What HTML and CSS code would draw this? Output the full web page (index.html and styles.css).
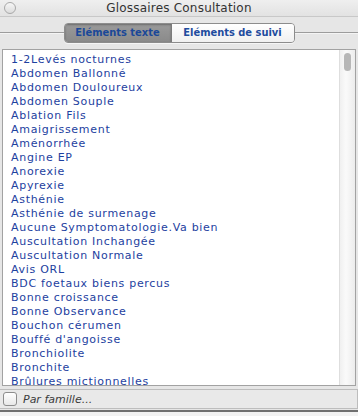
FILE: index.html
```html
<!DOCTYPE html>
<html lang="fr">
<head>
    <meta charset="UTF-8">
    <title>Glossaires Consultation</title>
    <link rel="stylesheet" href="styles.css">
</head>
<body>
    <div class="window">
        <div class="titlebar">
            <span class="close"></span>
            <span class="title">Glossaires Consultation</span>
        </div>

        <div class="tabrow">
            <div class="segmented">
                <span class="seg active">Eléments texte</span>
                <span class="seg">Eléments de suivi</span>
            </div>
        </div>

        <div class="listbox">
            <ul class="items">
                <li>1-2Levés nocturnes</li>
                <li>Abdomen Ballonné</li>
                <li>Abdomen Douloureux</li>
                <li>Abdomen Souple</li>
                <li>Ablation Fils</li>
                <li>Amaigrissement</li>
                <li>Aménorrhée</li>
                <li>Angine EP</li>
                <li>Anorexie</li>
                <li>Apyrexie</li>
                <li>Asthénie</li>
                <li>Asthénie de surmenage</li>
                <li>Aucune Symptomatologie.Va bien</li>
                <li>Auscultation Inchangée</li>
                <li>Auscultation Normale</li>
                <li>Avis ORL</li>
                <li>BDC foetaux biens percus</li>
                <li>Bonne croissance</li>
                <li>Bonne Observance</li>
                <li>Bouchon cérumen</li>
                <li>Bouffé d'angoisse</li>
                <li>Bronchiolite</li>
                <li>Bronchite</li>
                <li>Brûlures mictionnelles</li>
            </ul>
            <div class="scrollbar"><span class="thumb"></span></div>
        </div>

        <div class="bottombar">
            <span class="checkbox"></span>
            <span class="filter">Par famille...</span>
        </div>
        <div class="footer"></div>
    </div>
</body>
</html>
```

FILE: styles.css
```css
body { margin: 0; background-color: #e6e6e6; font-family: "DejaVu Sans", sans-serif; }
.window { width: 358px; height: 416px; display: flex; flex-direction: column; overflow: hidden; }

.titlebar { height: 17px; position: relative; display: flex; align-items: center; justify-content: center; background: linear-gradient(#efefef, #e2e2e2); border-bottom: 1px solid #c8c8c8; box-sizing: border-box; }
.title { font-size: 12px; color: #333333; letter-spacing: 0.2px; }
.close { position: absolute; left: 4px; top: 2px; width: 10px; height: 10px; border-radius: 50%; border: 1px solid #a8a8a8; background: linear-gradient(#f6f6f6, #dcdcdc); }

.tabrow { margin-top: 6px; height: 20px; position: relative; display: flex; justify-content: center; }
.tabrow::before { content: ""; position: absolute; left: 0; right: 0; top: 9px; border-top: 1px solid #9c9c9c; border-bottom: 1px solid #f4f4f4; }
.segmented { position: relative; display: flex; border: 1px solid #8c8c8c; border-radius: 4px; overflow: hidden; box-shadow: 0 1px 0 rgba(255,255,255,0.6); }
.seg { font-family: "DejaVu Sans Condensed", "DejaVu Sans", sans-serif; font-size: 11px; font-weight: bold; color: #1f4c9e; height: 18px; line-height: 18px; white-space: nowrap; text-align: center; background: linear-gradient(#ffffff, #f0f0f0); }
.seg.active { width: 106px; background: linear-gradient(#9a9a9a, #8a8a8a); color: #1b4898; border-right: 1px solid #7c7c7c; box-shadow: inset 0 1px 2px rgba(0,0,0,0.3); }
.seg + .seg { width: 122px; }

.listbox { margin: 6px 2px 0 2px; height: 337px; border: 1px solid #a2a2a2; background-color: #ffffff; display: flex; box-sizing: border-box; }
.items { flex: 1; list-style: none; margin: 0; padding: 3px 0 0 8px; overflow: hidden; }
.items li { font-size: 11px; line-height: 14px; height: 14px; color: #1d41a0; letter-spacing: 0.7px; white-space: nowrap; }
.scrollbar { width: 15px; background: linear-gradient(to right, #f0f0f0, #fafafa 40%, #ececec); border-left: 1px solid #dedede; display: flex; justify-content: center; padding-top: 3px; }
.thumb { width: 7px; height: 18px; border-radius: 4px; background-color: #b7b7b7; }

.bottombar { margin: 3px 0 0 0; height: 20px; background-color: #e9e9e9; border: 1px solid #bdbdbd; border-left: none; display: flex; align-items: center; gap: 6px; padding-left: 3px; box-sizing: border-box; }
.checkbox { width: 12px; height: 12px; border: 1px solid #8d8d8d; border-radius: 3px; background: linear-gradient(#ffffff, #e8e8e8); }
.filter { font-size: 11px; font-style: italic; color: #3c3c3c; }
.footer { flex: 1; margin-top: 1px; border-top: 2px solid #6f6f6f; background-color: #f2f2f2; }
```
